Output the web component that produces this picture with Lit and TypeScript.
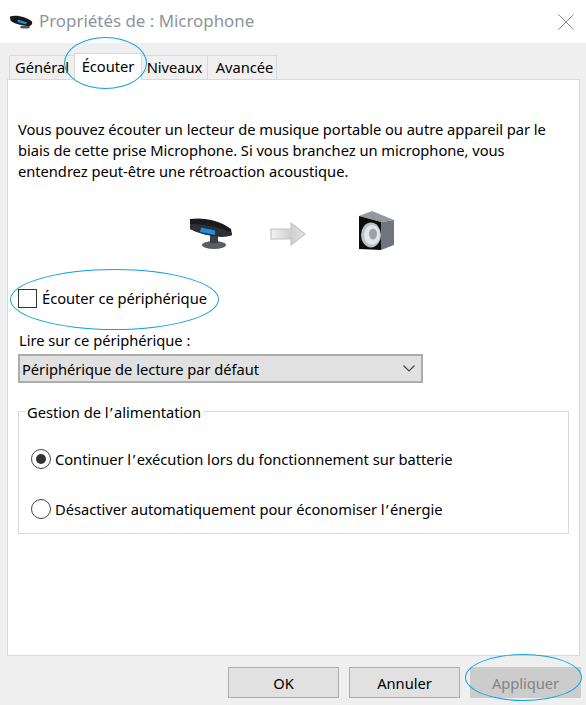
import { LitElement, html, css } from "lit";
import { customElement } from "lit/decorators.js";

@customElement("app-root")
export class AppRoot extends LitElement {
  static styles = css`
    :host { display: block; position: relative; width: 586px; height: 705px; overflow: hidden; background: #efefef; color: #000; font-family: "Noto Sans", "Open Sans", sans-serif; font-size: 14.7px; letter-spacing: -0.03px; }
    .title { height: 43px; background: #fff; display: flex; align-items: center; padding: 0 12px 0 10px; box-sizing: border-box; }
    .title-text { margin-left: 6px; font-size: 16.9px; color: #8d949b; flex: 1; letter-spacing: 0; padding-bottom: 2px; }
    .close { display: block; }
    .tabs { display: flex; height: 36px; padding: 12px 0 0 9px; box-sizing: border-box; align-items: flex-end; }
    .tab { height: 24px; box-sizing: border-box; border: 1px solid #d9d9d9; border-bottom: none; margin-right: -1px; display: flex; align-items: center; justify-content: center; background: #f0f0f0; padding-bottom: 1px; }
    .t1 { width: 66px; justify-content: flex-start; padding-left: 5px; }
    .t2 { width: 68px; height: 27px; background: #fff; position: relative; z-index: 2; margin-bottom: -1px; padding-bottom: 3px; }
    .t3 { width: 67px; }
    .t4 { width: 70px; padding-left: 5px; }
    .panel { margin: 0 6px 0 7px; height: 577px; box-sizing: border-box; border: 1px solid #d9d9d9; background: #fff; padding: 39px 10px 0 10px; }
    .desc { margin: 0; line-height: 21px; white-space: nowrap; }
    .icons { display: flex; align-items: flex-start; margin: 30px 0 0 171px; height: 44px; }
    .mic { margin-top: 6px; }
    .arrow { margin: 10px 0 0 37px; }
    .speaker { margin: -1px 0 0 52px; }
    .check { display: flex; align-items: center; margin-top: 32px; height: 20px; white-space: nowrap; }
    .box { width: 17px; height: 17px; border: 1px solid #333; background: #fff; margin-right: 5px; flex: none; }
    .lire { margin: 22px 0 0 1px; height: 20px; line-height: 20px; white-space: nowrap; }
    .select { margin-top: 4px; width: 405px; height: 29px; box-sizing: border-box; border: 2px solid #adadad; background: #e1e1e1; display: flex; align-items: center; justify-content: space-between; padding: 0 6px 0 2px; white-space: nowrap; }
    .group { position: relative; margin-top: 28px; width: 551px; height: 123px; box-sizing: border-box; border: 1px solid #d9d9d9; padding: 0 12px; display: flex; flex-direction: column; }
    .legend { position: absolute; left: 6px; top: -10px; background: #fff; padding: 0 2px; line-height: 20px; white-space: nowrap; }
    .ap { margin: 0 1.500px; }
    .radio-row { display: flex; align-items: center; height: 20px; white-space: nowrap; }
    .radio-row.first { margin-top: 37px; }
    .radio-row.second { margin-top: 30px; }
    .radio { width: 20px; height: 20px; box-sizing: border-box; border-radius: 50%; border: 1.5px solid #444; margin-right: 4px; display: flex; align-items: center; justify-content: center; flex: none; background: #fff; }
    .dot { width: 10px; height: 10px; border-radius: 50%; background: #333; }
    .footer { display: flex; justify-content: flex-end; gap: 10px; padding: 11px 5px 0 0; }
    .btn { width: 111px; height: 31px; box-sizing: border-box; border: 1px solid #adadad; background: #e1e1e1; display: flex; align-items: center; justify-content: center; }
    .btn.dis { background: #cccccc; border-color: #cccccc; color: #838383; }
    .ring { position: absolute; border: 1px solid #12a2dc; border-radius: 50%; box-sizing: border-box; pointer-events: none; z-index: 5; }
    .r1 { left: 64px; top: 37px; width: 83px; height: 52px; }
    .r2 { left: 10px; top: 269px; width: 209px; height: 61px; }
    .r3 { left: 465px; top: 654px; width: 117px; height: 47px; }
  `;

  render() {
    return html`
      <div class="title">
        <svg width="23" height="14" viewBox="0 0 23 14">
          <path d="M0 1.500C7 -.5 16 2 22 6.500C23 9 21 11 18 11.500C12 10 5 9 1.500 6.500C0 5 0 3 0 1.500Z" fill="#17181b"/>
          <path d="M8 4.500L17 7.500L16 9.500L7.500 7Z" fill="#1f8fe0"/>
          <ellipse cx="15" cy="12" rx="5" ry="1.600" fill="#55585c"/>
        </svg>
        <span class="title-text">Propriétés de : Microphone</span>
        <svg class="close" width="16" height="16" viewBox="0 0 16 16"><path d="M.5.5l15 15M15.500.5l-15 15" stroke="#8a8a8a" stroke-width="1" fill="none"/></svg>
      </div>
      <div class="tabs">
        <div class="tab t1">Général</div>
        <div class="tab t2">Écouter</div>
        <div class="tab t3">Niveaux</div>
        <div class="tab t4">Avancée</div>
      </div>
      <div class="panel">
        <p class="desc">Vous pouvez écouter un lecteur de musique portable ou autre appareil par le<br>biais de cette prise Microphone. Si vous branchez un microphone, vous<br>entendrez peut-être une rétroaction acoustique.</p>
        <div class="icons">
          <svg class="mic" width="44" height="32" viewBox="0 0 44 32">
            <ellipse cx="25" cy="27" rx="12" ry="4" fill="#5a5d61"/>
            <path d="M21 17h8v8h-8z" fill="#3d3f43"/>
            <path d="M1 1C15 -1 32 3 42 11L43 17C38 19 32 19 26 18C16 17 7 14 1 11Z" fill="#1a1b1e"/>
            <path d="M1 6C15 6 30 9 43 15L43 17C38 19 32 19 26 18C16 17 7 14 1 11Z" fill="#2e3034"/>
            <path d="M12 9.500L26 12.500L26 17L11 14Z" fill="#1c8fe3"/>
          </svg>
          <svg class="arrow" width="36" height="24" viewBox="0 0 36 24">
            <defs><linearGradient id="ag" x1="0" y1="0" x2="1" y2="0"><stop offset="0" stop-color="#f2f2f2"/><stop offset=".6" stop-color="#cfcfcf"/><stop offset="1" stop-color="#e6e6e6"/></linearGradient></defs>
            <path d="M1 7H21V1L35 12L21 23V17H1Z" fill="url(#ag)" stroke="#c4c4c4" stroke-width="1.2"/>
          </svg>
          <svg class="speaker" width="36" height="42" viewBox="0 0 36 42">
            <path d="M23 11L36 9V34L23 39Z" fill="#70757b"/>
            <path d="M1 5L14 0L36 9L23 11Z" fill="#94979c"/>
            <path d="M1 5L23 11V39L1 38Z" fill="#0c0c0c"/>
            <ellipse cx="13" cy="24" rx="10" ry="12.500" fill="#b9c0c4"/>
            <ellipse cx="14" cy="24" rx="8" ry="10" fill="#e2e6e8"/>
            <ellipse cx="15" cy="23" rx="4" ry="5.500" fill="#9aa3a8"/>
          </svg>
        </div>
        <div class="check"><div class="box"></div><span>Écouter ce périphérique</span></div>
        <div class="lire">Lire sur ce périphérique :</div>
        <div class="select">
          <span>Périphérique de lecture par défaut</span>
          <svg width="12" height="7" viewBox="0 0 12 7"><path d="M.5.5L6 6L11.500.5" stroke="#444" stroke-width="1.100" fill="none"/></svg>
        </div>
        <div class="group">
          <div class="legend">Gestion de l<span class="ap">’</span>alimentation</div>
          <div class="radio-row first"><div class="radio"><div class="dot"></div></div><span>Continuer l<span class="ap">’</span>exécution lors du fonctionnement sur batterie</span></div>
          <div class="radio-row second"><div class="radio"></div><span>Désactiver automatiquement pour économiser l<span class="ap">’</span>énergie</span></div>
        </div>
      </div>
      <div class="footer">
        <div class="btn">OK</div>
        <div class="btn">Annuler</div>
        <div class="btn dis">Appliquer</div>
      </div>
      <div class="ring r1"></div>
      <div class="ring r2"></div>
      <div class="ring r3"></div>
    `;
  }
}
